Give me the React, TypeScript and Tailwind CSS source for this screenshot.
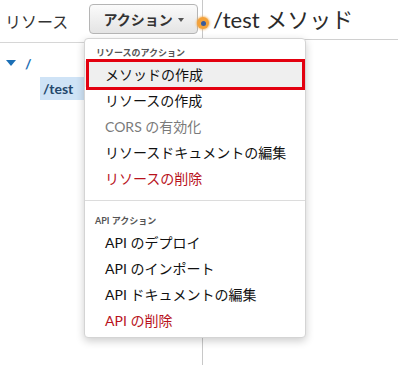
import React from 'react'

const font = { fontFamily: 'Lato, "Noto Sans CJK JP", sans-serif' }

type Item = { label: string; tone?: 'muted' | 'danger'; selected?: boolean }

const resourceActions: Item[] = [
  { label: 'メソッドの作成', selected: true },
  { label: 'リソースの作成' },
  { label: 'CORS の有効化', tone: 'muted' },
  { label: 'リソースドキュメントの編集' },
  { label: 'リソースの削除', tone: 'danger' },
]

const apiActions: Item[] = [
  { label: 'API のデプロイ' },
  { label: 'API のインポート' },
  { label: 'API ドキュメントの編集' },
  { label: 'API の削除', tone: 'danger' },
]

function MenuItem({ item }: { item: Item }) {
  const color =
    item.tone === 'danger' ? 'text-[#b8121c]' : item.tone === 'muted' ? 'text-[#7a7a7a]' : 'text-[#111]'
  return (
    <div
      className={`flex h-[26px] items-center pl-[20px] text-[14px] ${color} ${
        item.selected ? 'bg-[#efefef]' : ''
      }`}
    >
      {item.label}
    </div>
  )
}

export default function App() {
  return (
    <div className="relative flex h-[365px] w-[398px] overflow-hidden bg-white" style={font}>
      {/* Resource tree */}
      <div className="w-[203px] shrink-0 border-r border-[#c8c8c8]">
        <div className="flex h-[43px] items-start border-b border-[#d6d6d6]">
          <span className="mt-[10px] pl-[5px] text-[16px] text-[#333]">リソース</span>
          <button className="ml-[21px] mt-[4px] flex h-[30px] w-[109px] items-center justify-center gap-[5px] rounded-[4px] border border-[#b5b5b5] bg-gradient-to-b from-[#fbfbfb] to-[#e4e4e4] text-[14px] font-bold text-[#333]">
            アクション
            <span className="mt-[2px] h-0 w-0 border-x-[3px] border-t-[4px] border-x-transparent border-t-[#555]" />
          </button>
        </div>
        <div className="pt-[15px]">
          <div className="flex h-[10px] items-center gap-[9px] pl-[6px] text-[14px] font-bold text-[#1b6fb5]">
            <span className="h-0 w-0 border-x-[5px] border-t-[6px] border-x-transparent border-t-[#1b6fb5]" />
            <span>/</span>
          </div>
          <div className="ml-[40px] mt-[9px] flex h-[23px] items-center bg-[#cfe3f6] pl-[3px] text-[14px] font-bold text-[#24486c]">
            /test
          </div>
        </div>
      </div>

      {/* Method panel */}
      <div className="relative flex-1">
        <div className="flex h-[40px] items-start border-b border-[#d0d0d0]">
          <span className="ml-[10px] mt-[3px] text-[22px] text-[#2b2b2b]">/test メソッド</span>
        </div>
        <span className="absolute left-[-6px] top-[17px] flex h-[12px] w-[12px] items-center justify-center rounded-full bg-[#f4a23a] shadow-[0_0_2px_1px_rgba(244,162,58,0.6)]">
          <span className="h-[5px] w-[5px] rounded-full bg-[#3a5c9c]" />
        </span>
      </div>

      {/* Actions dropdown */}
      <div className="absolute left-[84px] top-[38px] w-[222px] rounded-[4px] border border-[#d4d4d4] bg-white pb-[4px] pt-[7px] shadow-[0_3px_8px_rgba(0,0,0,0.2)]">
        <div className="flex h-[14px] items-center pl-[11px] text-[9px] font-bold text-[#555]">
          リソースのアクション
        </div>
        <div className="mt-[1px]">
          {resourceActions.map((item) => (
            <MenuItem key={item.label} item={item} />
          ))}
        </div>
        <div className="mb-[13px] mt-[9px] border-t border-[#dcdcdc]" />
        <div className="flex h-[14px] items-center pl-[10px] text-[9px] font-bold text-[#555]">
          API アクション
        </div>
        <div className="mt-[1px]">
          {apiActions.map((item) => (
            <MenuItem key={item.label} item={item} />
          ))}
        </div>
        <div className="pointer-events-none absolute left-[1px] top-[20px] h-[31px] w-[219px] border-[3px] border-[#e3000f]" />
      </div>
    </div>
  )
}
